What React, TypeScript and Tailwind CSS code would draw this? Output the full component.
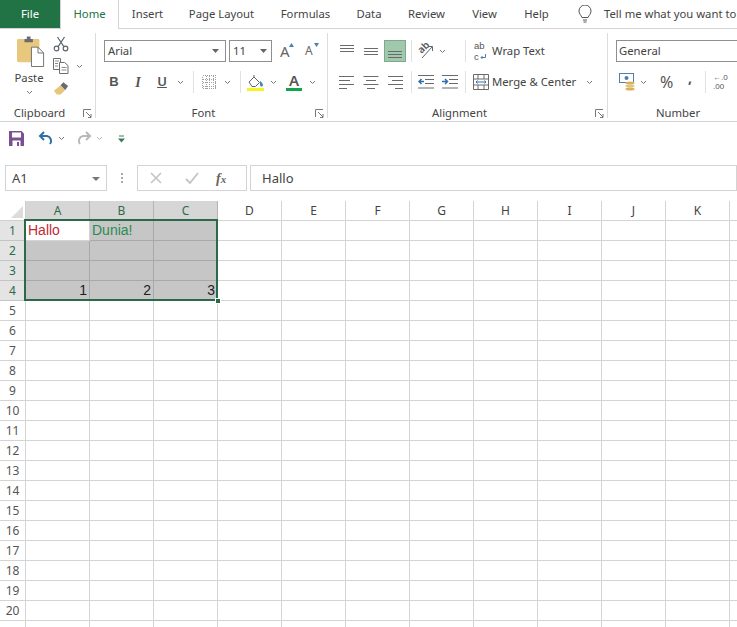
import React from "react";

const tabs: { label: string; width: string }[] = [
  { label: "Insert", width: "w-[57px]" },
  { label: "Page Layout", width: "w-[91px]" },
  { label: "Formulas", width: "w-[77px]" },
  { label: "Data", width: "w-[50px]" },
  { label: "Review", width: "w-[65px]" },
  { label: "View", width: "w-[51px]" },
  { label: "Help", width: "w-[53px]" },
];

// L only peeks in at the right edge, its letter is out of view
const columns = ["A", "B", "C", "D", "E", "F", "G", "H", "I", "J", "K", ""];
const rows = Array.from({ length: 21 }, (_, i) => i + 1);

const cellValues: Record<string, { text: string; className: string }> = {
  A1: { text: "Hallo", className: "text-left text-[#bf2a35]" },
  B1: { text: "Dunia!", className: "text-left text-[#2c8a50]" },
  A4: { text: "1", className: "text-right text-[#1c1c1c]" },
  B4: { text: "2", className: "text-right text-[#1c1c1c]" },
  C4: { text: "3", className: "text-right text-[#1c1c1c]" },
};

function Chevron({ className = "" }: { className?: string }) {
  return (
    <svg width="7" height="5" viewBox="0 0 7 5" className={`shrink-0 ${className}`} fill="none" stroke="#777777" strokeWidth="1">
      <path d="M1 1l2.500 2.500L6 1" />
    </svg>
  );
}

function Launcher() {
  return (
    <div className="flex w-4 items-center justify-center">
      <svg width="9" height="9" viewBox="0 0 9 9" fill="none" stroke="#777777" strokeWidth="1">
        <path d="M.5 8V.5H8M3 3l5 5M8 5v3.500H5" />
      </svg>
    </div>
  );
}

function Sep({ className = "" }: { className?: string }) {
  return <div className={`h-[22px] w-px shrink-0 bg-[#e1e1e1] ${className}`} />;
}

function Lines({ widths, align }: { widths: number[]; align: "left" | "center" | "right" }) {
  const x = (w: number) => (align === "left" ? 0 : align === "right" ? 16 - w : (16 - w) / 2);
  return (
    <svg width="16" height="14" viewBox="0 0 16 14" stroke="#6a6a6a" strokeWidth="1">
      {widths.map((w, i) => (
        <path key={i} d={`M${x(w)} ${1.5 + i * 4}h${w}`} />
      ))}
    </svg>
  );
}

function VLines({ top }: { top: number }) {
  return (
    <svg width="16" height="14" viewBox="0 0 16 14" stroke="#6a6a6a" strokeWidth="1">
      {[0, 3, 6].map((d) => (
        <path key={d} d={`M1 ${top + d + 0.5}h14`} />
      ))}
    </svg>
  );
}

function Indent({ flip }: { flip?: boolean }) {
  return (
    <svg width="16" height="14" viewBox="0 0 16 14" fill="none">
      <path d="M0 .5h16M7 4.500h9M7 8.500h9M0 13h16" stroke="#6a6a6a" />
      {flip ? (
        <path d="M0 6.500h5M3 4l2.500 2.500L3 9" stroke="#2f6ea8" strokeWidth="1.500" />
      ) : (
        <path d="M6 6.500H1M3.500 4L1 6.500 3.500 9" stroke="#2f6ea8" strokeWidth="1.500" />
      )}
    </svg>
  );
}

function PasteIcon() {
  return (
    <svg width="28" height="31" viewBox="0 0 30 32" preserveAspectRatio="none" className="ml-[4px]">
      <rect x="0" y="3" width="24" height="24" rx="1.500" fill="#e8c77f" />
      <path d="M8 3h2.500V.5h4V3H17v3.500H8z" fill="#6c6c70" />
      <path d="M15.500 11.500h7l6 6v14h-13z" fill="#ffffff" stroke="#6f6f6f" />
      <path d="M22.500 11.500v6h6" fill="none" stroke="#6f6f6f" />
    </svg>
  );
}

function ScissorsIcon() {
  return (
    <svg width="16" height="16" viewBox="0 0 16 16" fill="none" stroke="#5c6470" strokeWidth="1.200">
      <circle cx="3.500" cy="12.500" r="2.300" />
      <circle cx="12.500" cy="12.500" r="2.300" />
      <path d="M5 10.800L11.500 1M11 10.800L4.500 1" />
    </svg>
  );
}

function CopyIcon() {
  return (
    <svg width="16" height="16" viewBox="0 0 16 16" fill="#ffffff" stroke="#6e6e6e">
      <path d="M.5.5h7v11h-7z" />
      <path d="M6.500 4.500h5l3.500 3v8H6.500z" />
      <path d="M2 3h4M2 5.500h3M2 8h3M8.500 9.500h5M8.500 12h5" fill="none" strokeWidth=".8" />
    </svg>
  );
}

function BrushIcon() {
  return (
    <svg width="17" height="16" viewBox="0 0 18 16">
      <path d="M1 11l7-6 5 5-5 5H4z" fill="#e6c67c" />
      <path d="M8 5l3-3 5 4-3 4z" fill="#6a6a6a" />
    </svg>
  );
}

function BorderIcon() {
  return (
    <svg width="14" height="14" viewBox="0 0 14 14" fill="none" stroke="#777777" strokeDasharray="1 1" shapeRendering="crispEdges">
      <path d="M.5.500h13v13H.5zM.5 7.500h13M7.500 .500v13M.5 4h13M.5 11h13M4 .500v13M11 .500v13" strokeOpacity=".7" />
    </svg>
  );
}

function FillIcon() {
  return (
    <svg width="18" height="17" viewBox="0 0 18 17">
      <path d="M2 8l5-5 5.500 5.500-4 4H5z" fill="#ffffff" stroke="#666666" />
      <path d="M7 3V1" stroke="#666666" />
      <path d="M13 7c1.500 1 3 2.500 3 4a1.500 1.500 0 0 1-3 0z" fill="#4a86b8" />
      <rect x="0" y="14" width="17" height="3" fill="#f7f41f" />
    </svg>
  );
}

function FontColorIcon() {
  return (
    <div className="flex w-4 flex-col items-center">
      <span className="text-[15px] leading-[14px] font-semibold text-[#555555]">A</span>
      <div className="mt-px h-[3px] w-4 bg-[#10a550]" />
    </div>
  );
}

function GrowFont({ up }: { up?: boolean }) {
  return (
    <div className="relative flex w-[14px] justify-start">
      <span className={`${up ? "text-[15px]" : "text-[12px]"} leading-4 text-[#666666]`}>A</span>
      <svg width="5" height="4" viewBox="0 0 5 4" className="absolute top-0 right-0" fill="#4a7fae">
        <path d={up ? "M0 4l2.500-4L5 4z" : "M0 0h5L2.500 4z"} />
      </svg>
    </div>
  );
}

function OrientationIcon() {
  return (
    <div className="relative h-[18px] w-[18px]">
      <span className="absolute top-[-1px] left-[1px] -rotate-45 text-[10px] leading-3 font-semibold text-[#555555]">ab</span>
      <svg width="18" height="18" viewBox="0 0 18 18" fill="none" stroke="#666666" className="absolute top-0 left-0">
        <path d="M6 16L16 5M12 4.500h4.500V9" />
      </svg>
    </div>
  );
}

function WrapIcon() {
  return (
    <div className="ml-[8px] flex w-[15px] flex-col font-['Liberation_Sans',sans-serif] text-[9.500px] leading-[11px] text-[#555555]">
      <span>ab</span>
      <span className="flex items-center gap-px">
        c
        <svg width="6" height="6" viewBox="0 0 6 6" fill="none" stroke="#4a7fae">
          <path d="M5.500 0v3.500H1M2.500 2L1 3.500 2.500 5" />
        </svg>
      </span>
    </div>
  );
}

function MergeIcon() {
  return (
    <svg width="16" height="16" viewBox="0 0 16 16" fill="none">
      <path d="M.5.500h15v15H.5zM.5 5h15M.5 11h15M5 .500V5M11 .500V5M5 11v4.500M11 11v4.500" stroke="#6a6a6a" />
      <path d="M3 8h10M4.500 6.500L3 8l1.500 1.500M11.500 6.500L13 8l-1.500 1.500" stroke="#2f6ea8" />
    </svg>
  );
}

function AccountingIcon() {
  return (
    <svg width="18" height="18" viewBox="0 0 18 18">
      <rect x="0.500" y="0.500" width="14" height="9" fill="#ffffff" stroke="#4a7fae" />
      <circle cx="7.500" cy="5" r="2" fill="#4a7fae" />
      <ellipse cx="11" cy="10" rx="4.500" ry="1.500" fill="#d7b15c" />
      <ellipse cx="11" cy="13" rx="4.500" ry="1.500" fill="#e3c47e" />
      <ellipse cx="11" cy="16" rx="4.500" ry="1.500" fill="#d7b15c" />
    </svg>
  );
}

function GroupLabel({ label }: { label: string }) {
  return (
    <div className="flex h-4 shrink-0 items-center">
      <span className="flex-1 text-center text-[11.300px] leading-4 text-[#444444]">{label}</span>
      <Launcher />
    </div>
  );
}

function GroupDivider() {
  return (
    <div className="flex shrink-0 flex-col pt-[4px] pb-[3px]">
      <div className="h-full w-px bg-[#dcdcdc]" />
    </div>
  );
}

function Ribbon() {
  return (
    <div className="flex h-[93px] shrink-0 border-b border-[#d4d4d4] bg-white">
      {/* Clipboard */}
      <div className="flex w-[95px] shrink-0 flex-col">
        <div className="flex h-[75px] pt-[7px]">
          <div className="ml-[14px] flex w-[30px] flex-col items-center">
            <PasteIcon />
            <span className="mt-[3px] text-[11.300px] leading-[16px] text-[#444444]">Paste</span>
            <Chevron className="mt-[4px]" />
          </div>
          <div className="ml-[9px] flex flex-col items-start gap-[6px]">
            <ScissorsIcon />
            <div className="flex items-center gap-[7px]">
              <CopyIcon />
              <Chevron />
            </div>
            <BrushIcon />
          </div>
        </div>
        <div className="flex-1" />
        <GroupLabel label="Clipboard" />
      </div>
      <GroupDivider />
      {/* Font */}
      <div className="flex w-[231px] shrink-0 flex-col">
        <div className="flex h-[76px] flex-col gap-[9px] pt-[11px] pl-[8px]">
          <div className="flex h-[22px] items-center">
            <div className="flex h-[22px] w-[122px] items-center justify-between border border-[#8f8f8f] pr-[6px] pl-[3px] text-[11.300px] text-[#444444]">
              Arial
              <svg width="7" height="4" viewBox="0 0 7 4" fill="#666666"><path d="M0 0h7L3.500 4z" /></svg>
            </div>
            <div className="ml-[3px] flex h-[22px] w-[43px] items-center justify-between border border-[#8f8f8f] pr-[4px] pl-[3px] text-[11.300px] text-[#444444]">
              11
              <svg width="7" height="4" viewBox="0 0 7 4" fill="#666666"><path d="M0 0h7L3.500 4z" /></svg>
            </div>
            <div className="ml-[8px]"><GrowFont up /></div>
            <div className="ml-[11px]"><GrowFont /></div>
          </div>
          <div className="flex h-[22px] items-center">
            <span className="w-[20px] text-center font-['Liberation_Sans',sans-serif] text-[13px] font-bold text-[#555555]">B</span>
            <span className="w-[28px] text-center font-['Liberation_Serif',serif] text-[14px] font-bold text-[#555555] italic">I</span>
            <span className="w-[20px] text-center text-[13px] font-semibold text-[#555555] underline">U</span>
            <Chevron className="ml-[5px]" />
            <Sep className="ml-[9px]" />
            <div className="ml-[8px]"><BorderIcon /></div>
            <Chevron className="ml-[8px]" />
            <Sep className="ml-[9px]" />
            <div className="ml-[6px]"><FillIcon /></div>
            <Chevron className="ml-[5px]" />
            <div className="ml-[9px]"><FontColorIcon /></div>
            <Chevron className="ml-[7px]" />
          </div>
        </div>
        <div className="flex-1" />
        <GroupLabel label="Font" />
      </div>
      <GroupDivider />
      {/* Alignment */}
      <div className="flex w-[279px] shrink-0 flex-col">
        <div className="flex h-[76px] flex-col gap-[9px] pt-[11px] pl-[11px]">
          <div className="flex h-[22px] items-center">
            <VLines top={1} />
            <div className="ml-[8px]"><VLines top={4} /></div>
            <div className="ml-[5px] flex h-[22px] w-[22px] items-center justify-center border border-[#7fa98f] bg-[#a0c8ac]">
              <VLines top={7} />
            </div>
            <Sep className="ml-[5px]" />
            <div className="ml-[4px]"><OrientationIcon /></div>
            <Chevron className="ml-[5px]" />
            <Sep className="ml-[19px]" />
            <WrapIcon />
            <span className="ml-[3px] text-[11.300px] whitespace-nowrap text-[#444444]">Wrap Text</span>
          </div>
          <div className="flex h-[22px] items-center">
            <Lines align="left" widths={[15, 11, 15, 8]} />
            <div className="ml-[8px]"><Lines align="center" widths={[15, 10, 15, 8]} /></div>
            <div className="ml-[8px]"><Lines align="right" widths={[15, 11, 15, 8]} /></div>
            <Sep className="ml-[8px]" />
            <div className="ml-[6px]"><Indent /></div>
            <div className="ml-[8px]"><Indent flip /></div>
            <Sep className="ml-[7px]" />
            <div className="ml-[7px]"><MergeIcon /></div>
            <span className="ml-[3px] text-[11.300px] whitespace-nowrap text-[#444444]">Merge &amp; Center</span>
            <Chevron className="ml-[10px]" />
          </div>
        </div>
        <div className="flex-1" />
        <GroupLabel label="Alignment" />
      </div>
      <GroupDivider />
      {/* Number */}
      <div className="flex min-w-0 flex-1 flex-col">
        <div className="flex h-[76px] flex-col gap-[9px] pt-[11px] pl-[8px]">
          <div className="flex h-[22px] w-[150px] items-center border border-[#8f8f8f] px-[2px] text-[11.300px] text-[#444444]">
            General
          </div>
          <div className="flex h-[22px] items-center">
            <div className="ml-[3px]"><AccountingIcon /></div>
            <Chevron className="ml-[3px]" />
            <span className="ml-[13px] w-[16px] text-[16px] text-[#555555]">%</span>
            <span className="ml-[10px] -mt-[8px] w-[8px] text-center text-[14px] leading-[10px] font-bold text-[#555555]">,</span>
            <Sep className="ml-[11px]" />
            <div className="ml-[7px] flex w-[18px] flex-col font-['Liberation_Sans',sans-serif] text-[8px] leading-[9.500px] text-[#555555]">
              <span>←.0</span>
              <span>.00</span>
            </div>
          </div>
        </div>
        <div className="flex-1" />
        <div className="h-4 w-[140px] text-center text-[11.300px] leading-4 text-[#444444]">Number</div>
      </div>
    </div>
  );
}

function QuickAccess() {
  return (
    <div className="flex h-[33px] shrink-0 items-center pl-[9px]">
      <svg width="15" height="15" viewBox="0 0 15 15">
        <path d="M0 0h12.500L15 2.500V15H0z" fill="#7c4f93" />
        <rect x="3" y="1.500" width="9" height="5" fill="#ffffff" />
        <rect x="3.500" y="9.500" width="8" height="5.500" fill="#ffffff" />
        <rect x="8" y="11" width="2" height="4" fill="#7c4f93" />
      </svg>
      <svg width="16" height="15" viewBox="0 0 16 15" fill="none" stroke="#2f6ea8" strokeWidth="2" className="ml-[14px]">
        <path d="M6 1L2 5l4 4M2 5h7a5 5 0 0 1 3 8" />
      </svg>
      <Chevron className="ml-[4px]" />
      <svg width="16" height="15" viewBox="0 0 16 15" fill="none" stroke="#b8b8b8" strokeWidth="2" className="ml-[11px]">
        <path d="M10 1l4 4-4 4M14 5H7a5 5 0 0 0-3 8" />
      </svg>
      <Chevron className="ml-[4px] opacity-50" />
      <svg width="7" height="8" viewBox="0 0 7 8" className="ml-[15px]">
        <path d="M1 1h5" stroke="#3d7a5a" />
        <path d="M0 3.500h7L3.500 7.500z" fill="#3d7a5a" />
      </svg>
    </div>
  );
}

function FormulaBar() {
  return (
    <div className="mt-[10px] flex h-[26px] shrink-0 items-stretch pl-[5px]">
      <div className="flex w-[102px] items-center justify-between border border-[#d4d4d4] pt-px pr-[6px] pl-[6px] text-[13px] text-[#444444]">
        A1
        <svg width="8" height="4" viewBox="0 0 8 4" fill="#777777"><path d="M0 0h8L4 4z" /></svg>
      </div>
      <div className="flex w-[30px] flex-col items-center justify-center gap-[2px]">
        <div className="h-[2px] w-[2px] bg-[#aaaaaa]" />
        <div className="h-[2px] w-[2px] bg-[#aaaaaa]" />
        <div className="h-[2px] w-[2px] bg-[#aaaaaa]" />
      </div>
      <div className="flex w-[110px] items-center border border-[#d4d4d4] pl-[12px]">
        <svg width="12" height="12" viewBox="0 0 12 12" stroke="#c4c4c4" strokeWidth="1.600" fill="none">
          <path d="M1 1l10 10M11 1L1 11" />
        </svg>
        <svg width="14" height="12" viewBox="0 0 14 12" stroke="#c4c4c4" strokeWidth="1.800" fill="none" className="ml-[23px]">
          <path d="M1 7l4 4 8-10" />
        </svg>
        <span className="ml-[17px] font-['Liberation_Serif',serif] text-[14px] font-bold text-[#666666] italic">
          f<span className="text-[11px]">x</span>
        </span>
      </div>
      <div className="ml-[3px] flex flex-1 items-center border border-[#d4d4d4] pt-px pl-[11px] text-[13px] text-[#444444]">
        Hallo
      </div>
    </div>
  );
}

function Sheet() {
  const isSelected = (col: number, row: number) => col < 3 && row <= 4;
  return (
    <div className="relative mt-[10px] min-h-0 flex-1 overflow-hidden">
      <div className="grid grid-cols-[26px_repeat(12,64px)] auto-rows-[20px]">
        <div className="flex items-end justify-end border-r border-b border-[#cfcfcf] bg-white pr-[2px] pb-[2px]">
          <svg width="12" height="12" viewBox="0 0 12 12" fill="#dcdcdc"><path d="M12 0v12H0z" /></svg>
        </div>
        {columns.map((c, i) => (
          <div
            key={i}
            className={
              i < 3
                ? "flex items-center justify-center border-r border-b border-[#b4b4b4] bg-[#d6d6d6] text-[12px] text-[#2f6b4a]"
                : "flex items-center justify-center border-r border-b border-[#d4d4d4] bg-white text-[12px] text-[#444444]"
            }
          >
            {c}
          </div>
        ))}
        {rows.map((r) => (
          <React.Fragment key={r}>
            <div
              className={
                r <= 4
                  ? "flex items-center justify-center border-r border-b border-[#c4c4c4] bg-[#e4e4e4] text-[12px] text-[#2f6b4a]"
                  : "flex items-center justify-center border-r border-b border-[#d4d4d4] bg-white text-[12px] text-[#555555]"
              }
            >
              {r <= 20 ? r : ""}
            </div>
            {columns.map((c, i) => {
              const value = cellValues[`${c}${r}`];
              const active = c === "A" && r === 1;
              return (
                <div
                  key={i}
                  className={
                    isSelected(i, r) && !active
                      ? `border-r border-b border-[#a9a9a9] bg-[#c6c6c6] px-[2px] font-['Liberation_Sans',sans-serif] text-[14px] leading-[19px] ${value?.className ?? ""}`
                      : `border-r border-b border-[#d4d4d4] bg-white px-[2px] font-['Liberation_Sans',sans-serif] text-[14px] leading-[19px] ${value?.className ?? ""}`
                  }
                >
                  {value?.text}
                </div>
              );
            })}
          </React.Fragment>
        ))}
      </div>
      {/* Selection frame over A1:C4 */}
      <div className="pointer-events-none absolute top-[18px] left-[24px] h-[82px] w-[194px] border-2 border-[#2a6a4a]" />
      <div className="pointer-events-none absolute top-[97px] left-[215px] h-[6px] w-[6px] border border-white bg-[#2a6a4a]" />
    </div>
  );
}

export default function App() {
  return (
    <div className="flex h-[627px] w-[737px] flex-col overflow-hidden bg-white font-['Noto_Sans',sans-serif]">
      <div className="flex h-[29px] shrink-0 border-b border-[#d4d4d4] text-[11.300px] text-[#444444]">
        <div className="flex h-[28px] w-[60px] items-center justify-center bg-[#217346] text-white">File</div>
        <div className="-mb-px flex h-[29px] w-[59px] items-center justify-center border-x border-[#d4d4d4] bg-white text-[#217346]">
          Home
        </div>
        {tabs.map((t) => (
          <div key={t.label} className={`flex items-center justify-center whitespace-nowrap ${t.width}`}>
            {t.label}
          </div>
        ))}
        <svg width="14" height="18" viewBox="0 0 14 18" fill="none" stroke="#555555" className="mt-[5px] ml-[15px] shrink-0">
          <path d="M4 12.500C3 10 1 9 1 6a6 6 0 0 1 12 0c0 3-2 4-3 6.500zM5 15h4M5.500 17h3" />
        </svg>
        <span className="ml-[12px] flex items-center whitespace-nowrap">Tell me what you want to</span>
      </div>
      <Ribbon />
      <QuickAccess />
      <FormulaBar />
      <Sheet />
    </div>
  );
}
